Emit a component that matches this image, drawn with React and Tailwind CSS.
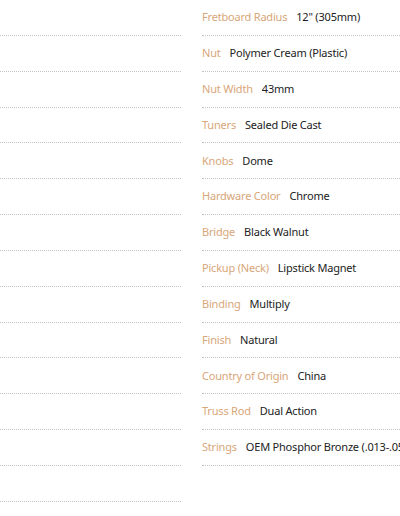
import React from 'react'

const specs = [
    ["Fretboard Radius", "12\" (305mm)"],
    ["Nut", "Polymer Cream (Plastic)"],
    ["Nut Width", "43mm"],
    ["Tuners", "Sealed Die Cast"],
    ["Knobs", "Dome"],
    ["Hardware Color", "Chrome"],
    ["Bridge", "Black Walnut"],
    ["Pickup (Neck)", "Lipstick Magnet"],
    ["Binding", "Multiply"],
    ["Finish", "Natural"],
    ["Country of Origin", "China"],
    ["Truss Rod", "Dual Action"],
    ["Strings", "OEM Phosphor Bronze (.013-.056)"],
]

function App() {
    return (
        <div className='w-[400px] h-[516px] overflow-hidden bg-white flex gap-[21px] font-["Noto_Sans",sans-serif]'>
            <div className='w-[181px] shrink-0 flex flex-col'>
                {Array.from({ length: 14 }).map((_, i) => (
                    <div key={i} className='h-[35.85px] shrink-0 border-b border-dotted border-[#c4c4c4]' />
                ))}
            </div>
            <div className='w-[260px] shrink-0 flex flex-col'>
                {specs.map(([label, value], i) => (
                    <div key={i} className='h-[35.85px] shrink-0 flex items-center gap-[9px] border-b border-dotted border-[#c4c4c4] text-[11px] tracking-[-0.2px] whitespace-nowrap'>
                        <span className='text-[#d8a679]'>{label}</span>
                        <span className='text-[#222]'>{value}</span>
                    </div>
                ))}
            </div>
        </div>
    )
}

export default App
